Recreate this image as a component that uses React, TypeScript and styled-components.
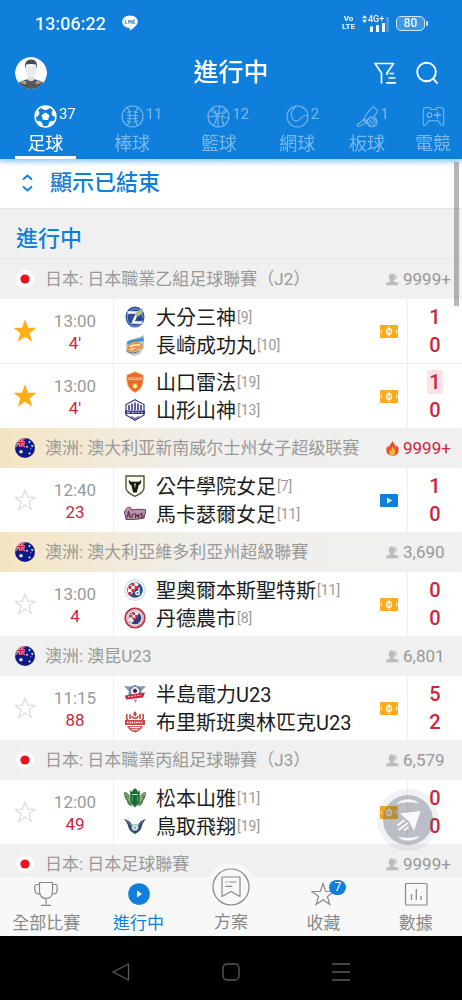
import React, { useState } from "react";
import styled, { createGlobalStyle, css } from "styled-components";

const blue = "#0f7fdb";
const red = "#cb2640";
const grey = "#999999";
const line = "#efefef";

const GlobalStyle = createGlobalStyle`
  * { box-sizing: border-box; }
  body {
    margin: 0;
    background: #000;
    font-family: Roboto, "Noto Sans CJK TC", sans-serif;
    color: #1c1c1c;
  }
  button {
    font: inherit;
    color: inherit;
    background: none;
    border: 0;
    padding: 0;
    margin: 0;
    cursor: pointer;
  }
  h1, h2, h3, ul, p { margin: 0; padding: 0; }
  ul { list-style: none; }
  svg { display: block; flex: none; }
`;

const Screen = styled.div`
  display: flex;
  flex-direction: column;
  height: 100vh;
  background: #fff;
`;

/* ---------- header ---------- */

const Header = styled.header`
  position: relative;
  z-index: 2;
  flex: none;
  background: ${blue};
  color: #fff;
  box-shadow: 0 1px 6px 1px rgba(30, 140, 235, 0.6);
`;

const StatusBar = styled.div`
  display: flex;
  align-items: center;
  height: 46px;
  padding: 0 34px 0 35px;
  color: #eef6fd;
`;

const Clock = styled.time`
  font-size: 18px;
  font-weight: 500;
  margin-right: 16px;
`;

const StatusRight = styled.div`
  display: flex;
  align-items: center;
  gap: 7px;
  margin-left: auto;
`;

const Volte = styled.span`
  display: flex;
  flex-direction: column;
  align-items: center;
  font-size: 8px;
  line-height: 8px;
  font-weight: 700;
`;

const Signal = styled.span`
  display: grid;
  grid-template-columns: 5px 17px 3px;
  column-gap: 1px;
  align-items: start;
`;

const Network = styled.span`
  display: block;
  font-size: 9px;
  line-height: 8px;
  font-weight: 500;
`;

const Battery = styled.span`
  position: relative;
  width: 29px;
  height: 15px;
  border: 1px solid #cfe5f8;
  border-radius: 5px;
  background: #3f98e2;
  font-size: 12px;
  line-height: 13px;
  font-weight: 500;
  text-align: center;
  margin-right: 3px;
  &::after {
    content: "";
    position: absolute;
    right: -4px;
    top: 4px;
    width: 2px;
    height: 5px;
    border-radius: 1px;
    background: #cfe5f8;
  }
`;

const TitleBar = styled.div`
  display: grid;
  grid-template-columns: 1fr auto 1fr;
  align-items: center;
  height: 54px;
  padding: 0 15px;
`;

const PageTitle = styled.h1`
  font-size: 25px;
  line-height: 36px;
  font-weight: 500;
`;

const Avatar = styled.button`
  width: 32px;
  height: 32px;
  border-radius: 50%;
  overflow: hidden;
`;

const Actions = styled.div`
  display: flex;
  justify-content: flex-end;
  gap: 18px;
  padding-right: 8px;
`;

const Tabs = styled.div`
  display: flex;
  gap: 26px;
  padding: 0 11px 0 15px;
  height: 59px;
  overflow: hidden;
`;

const Tab = styled.button<{ $on?: boolean }>`
  display: flex;
  flex-direction: column;
  align-items: center;
  flex: none;
  padding-top: 5px;
  color: ${(p) => (p.$on ? "#fff" : "#79b8ec")};
  border-bottom: 3px solid ${(p) => (p.$on ? "#fff" : "transparent")};
`;

const TabTop = styled.span`
  display: grid;
  grid-template-columns: 1fr auto 1fr;
`;

const TabCount = styled.span`
  grid-column: 3;
  padding-left: 2px;
  font-size: 15px;
  line-height: 19px;
`;

const TabIcon = styled.span`
  grid-column: 2;
`;

const TabLabel = styled.span`
  font-size: 18px;
  line-height: 26px;
  margin-top: 3px;
`;

/* ---------- list ---------- */

const Body = styled.div`
  position: relative;
  flex: 1;
  min-height: 0;
`;

const Scroller = styled.main`
  height: 100%;
  overflow-y: auto;
  scrollbar-width: none;
`;

const ScrollThumb = styled.div`
  position: absolute;
  top: 3px;
  right: 3px;
  width: 5px;
  height: 144px;
  background: rgba(110, 110, 110, 0.5);
`;

const ShowFinished = styled.button`
  display: flex;
  align-items: center;
  gap: 17px;
  width: 100%;
  height: 50px;
  padding: 0 22px 2px;
  color: ${blue};
  background: #fff;
  border-bottom: 1px solid #e4e4e4;
  font-size: 22px;
  line-height: 32px;
  font-weight: 500;
`;

const SectionTitle = styled.h2`
  height: 50px;
  padding: 14px 16px 0;
  background: #f0f0f0;
  color: ${blue};
  border-bottom: 1px solid #e8e8e8;
  font-size: 22px;
  line-height: 32px;
  font-weight: 500;
`;

const LeagueHead = styled.div<{ $gold?: boolean }>`
  display: grid;
  grid-template-columns: 45px 1fr 76px;
  align-items: center;
  height: 40px;
  color: ${grey};
  background: ${(p) =>
    p.$gold ? "linear-gradient(90deg, #f4e5c3 0%, #f0efed 45%, #f0f0f0 100%)" : "#f0f0f0"};
`;

const FlagCell = styled.span`
  display: flex;
  padding-left: 15px;
`;

const LeagueName = styled.h3`
  font-size: 17px;
  line-height: 24px;
  font-weight: 400;
  white-space: nowrap;
`;

const Viewers = styled.span<{ $hot?: boolean }>`
  display: flex;
  align-items: center;
  gap: 4px;
  font-size: 17px;
  color: ${(p) => (p.$hot ? red : grey)};
`;

const MatchRow = styled.li`
  display: grid;
  grid-template-columns: 50px 64px 1fr 27px 55px;
  box-sizing: content-box;
  height: 64px;
  background: #fff;
  & + & {
    border-top: 1px solid ${line};
  }
`;

const StarButton = styled.button`
  display: flex;
  align-items: center;
  justify-content: center;
`;

const TimeCell = styled.div`
  display: flex;
  flex-direction: column;
  justify-content: center;
  padding: 1px 13px 0 0;
  border-right: 1px solid ${line};
  font-size: 17px;
  line-height: 22px;
  text-align: center;
  color: ${grey};
`;

const Minute = styled.span`
  color: ${red};
`;

const Teams = styled.div`
  display: flex;
  flex-direction: column;
  justify-content: center;
  padding-left: 10px;
  min-width: 0;
`;

const Team = styled.div`
  display: flex;
  align-items: center;
  height: 28px;
  white-space: nowrap;
`;

const TeamName = styled.span`
  margin-left: 10px;
  padding-top: 1px;
  font-size: 20px;
  line-height: 28px;
`;

const Rank = styled.span`
  margin-left: 1px;
  font-size: 14px;
  color: ${grey};
`;

const Media = styled.div`
  display: flex;
  align-items: center;
`;

const Scores = styled.div`
  display: flex;
  flex-direction: column;
  justify-content: center;
  align-items: center;
  gap: 4px;
  border-left: 1px solid ${line};
`;

const Score = styled.span<{ $flash?: boolean }>`
  width: 16px;
  height: 24px;
  border-radius: 3px;
  font-size: 20px;
  line-height: 24px;
  font-weight: 500;
  text-align: center;
  color: ${red};
  ${(p) =>
    p.$flash &&
    css`
      background: #fae2e5;
    `}
`;

const Fab = styled.button`
  position: absolute;
  right: 23px;
  bottom: 26px;
  width: 62px;
  height: 62px;
`;

/* ---------- bottom ---------- */

const BottomNav = styled.nav`
  position: relative;
  z-index: 2;
  display: flex;
  align-items: flex-start;
  flex: none;
  height: 59px;
  background: #f8f8f8;
`;

const NavItem = styled.button<{ $on?: boolean; $raised?: boolean }>`
  display: flex;
  flex-direction: column;
  align-items: center;
  flex: 1;
  gap: ${(p) => (p.$raised ? "0" : "6px")};
  padding-top: ${(p) => (p.$raised ? "0" : "5px")};
  margin-top: ${(p) => (p.$raised ? "-14px" : "0")};
  color: ${(p) => (p.$on ? blue : "#888")};
`;

const NavIcon = styled.span<{ $raised?: boolean }>`
  position: relative;
  display: flex;
  align-items: center;
  justify-content: center;
  width: ${(p) => (p.$raised ? "48px" : "24px")};
  height: ${(p) => (p.$raised ? "48px" : "24px")};
  border-radius: 50%;
  background: #f8f8f8;
`;

const NavLabel = styled.span`
  font-size: 17px;
  line-height: 22px;
`;

const Badge = styled.span`
  position: absolute;
  top: -2px;
  left: 18px;
  width: 17px;
  height: 15px;
  border-radius: 8px;
  background: ${blue};
  color: #fff;
  font-size: 12px;
  line-height: 15px;
  text-align: center;
`;

const SystemNav = styled.div`
  display: flex;
  align-items: center;
  justify-content: center;
  gap: 92px;
  flex: none;
  height: 64px;
  padding-top: 8px;
  background: #000;
  color: #5c5c5c;
`;

/* ---------- sport icons ---------- */

const Sport = ({ children }: { children: React.ReactNode }) => (
  <svg width="23" height="23" viewBox="0 0 23 23" fill="none" stroke="currentColor" strokeWidth="1.1" strokeLinecap="round" strokeLinejoin="round">
    {children}
  </svg>
);

const sportIcons: Record<string, React.ReactNode> = {
  soccer: (
    <Sport>
      <circle cx="11.5" cy="11.5" r="10.4" strokeWidth="1.5" />
      <g fill="currentColor" stroke="none">
        <path d="M11.5 7.400l4 2.900-1.500 4.700H9l-1.500-4.700z" />
        <path d="M7.300 2.200c2.600-1.300 5.800-1.300 8.400 0l-1 1.800-3.200 1.200-3.200-1.200z" />
        <path d="M1 11.200c0-2.200.8-4.400 2.100-5.900l1.900.7.400 3.200L3.200 11.800z" />
        <path d="M22 11.200c0-2.200-.8-4.400-2.100-5.900l-1.900.7-.4 3.200 2.200 2.600z" />
        <path d="M3 17.300c1.200 1.900 3.100 3.400 5.200 4l.6-2-1.600-2.700-3.100-.8z" />
        <path d="M20 17.300c-1.200 1.900-3.100 3.400-5.200 4l-.6-2 1.600-2.700 3.100-.8z" />
      </g>
    </Sport>
  ),
  baseball: (
    <Sport>
      <circle cx="11.500" cy="11.500" r="10.500" />
      <path d="M6.500 2.500c3 5.500 3 12.500 0 18M16.500 2.500c-3 5.500-3 12.500 0 18" />
      <path d="M6.200 7.500l4-1M6.600 10.500h4.200M6.600 13.300l4.200.4M6 16l4 1.300M16.800 7.500l-4-1M16.400 10.500h-4.200M16.400 13.300l-4.200.4M17 16l-4 1.300" />
    </Sport>
  ),
  basketball: (
    <Sport>
      <circle cx="11.500" cy="11.500" r="10.500" />
      <path d="M13 1.200C11 8 10.500 15 11 22M1.200 12c7-1.500 14-1.500 20.600 1.500" />
      <path d="M5 3.500c5 3 6 10 1.500 17M20.300 6c-6 2.500-6.500 9.500-3 14.300M3.500 5c4 5 11 5.500 15.500-1" />
    </Sport>
  ),
  tennis: (
    <Sport>
      <circle cx="11.500" cy="11.500" r="10.500" />
      <path d="M9.800 1.300C5.500 5 4 10.500 6.500 14c2.200 3 5.900 2.600 7.800-.2 1.700-2.500 4.200-3.500 7.500-3.300" />
    </Sport>
  ),
  cricket: (
    <Sport>
      <path d="M17.500 1.700l4 3.600c.3 2-6.500 10.500-10 13.200L7.200 15C9 11 14.500 3.500 17.500 1.700z" />
      <path d="M8.300 14l3.800 3.500M7.300 15.200l-5.800 4.300c-.9.900.8 2.600 1.800 1.700L9.500 18" />
      <circle cx="16" cy="16.800" r="5" fill={blue} />
      <path d="M12.500 13.800l6 7M14.800 12l5.500 6.700M11.300 16.500l4 5M17.500 12.200l3 3.700" />
    </Sport>
  ),
  esports: (
    <Sport>
      <path d="M4 2.500h4.500v2h6v-2H19c2.200 0 2.700 2 2.700 4v12.200c0 1.800-2 2.300-3 .8l-2.400-3.800H6.700l-2.400 3.800c-1 1.500-3 1-3-.8V6.500c0-2 .5-4 2.700-4z" />
      <circle cx="7.500" cy="10" r="2.300" />
      <path d="M15.500 7v6M12.500 10h6" strokeWidth="1.500" />
    </Sport>
  ),
};

/* ---------- flags and marks ---------- */

const Flag = ({ country }: { country: string }) =>
  country === "jp" ? (
    <svg width="20" height="20" viewBox="0 0 20 20" role="img" aria-label="日本">
      <circle cx="10" cy="10" r="9" fill="#fff" />
      <circle cx="10" cy="10" r="4.600" fill="#e8131f" />
    </svg>
  ) : (
    <svg width="20" height="20" viewBox="0 0 20 20" role="img" aria-label="澳洲">
      <defs>
        <clipPath id="disc">
          <circle cx="10" cy="10" r="10" />
        </clipPath>
      </defs>
      <g clipPath="url(#disc)">
        <path d="M0 0h20v20H0z" fill="#101a86" />
        <path d="M0 0l10 9M10 0L0 9" stroke="#f3d3da" strokeWidth="1.600" />
        <path d="M0 0l10 9M10 0L0 9" stroke="#d8203a" strokeWidth=".9" />
        <path d="M5.500 0v9M0 4.700h10" stroke="#f6dfe4" strokeWidth="2.400" />
        <path d="M5.500 0v9M0 4.700h10" stroke="#d8203a" strokeWidth="1.500" />
        <g fill="#fff">
          <path d="M6 11.400l.6 1.300 1.400-.2-.8 1.200.8 1.200-1.400-.1-.6 1.200-.6-1.200-1.400.1.800-1.200-.8-1.200 1.400.2z" />
          <circle cx="14.500" cy="4" r=".9" />
          <circle cx="12" cy="8.800" r=".9" />
          <circle cx="17.200" cy="8" r=".9" />
          <circle cx="14.500" cy="15.500" r="1" />
          <circle cx="15.800" cy="10.800" r=".5" />
        </g>
      </g>
    </svg>
  );

const Person = () => (
  <svg width="13" height="13" viewBox="0 0 13 13" aria-hidden="true">
    <circle cx="8.500" cy="4" r="2.800" fill="#d2d2d2" />
    <path d="M6 12c0-3 2-3.500 3.500-3.500S13 9.500 13 12z" fill="#d2d2d2" />
    <ellipse cx="5.800" cy="4" rx="3" ry="3.600" fill="#bcbcbc" />
    <path d="M0 12.300c0-2.800 1.500-3.200 4.200-3.900V6.500h3.200v1.900c2.600.7 4.200 1.100 4.200 3.900z" fill="#bcbcbc" />
  </svg>
);

const Fire = () => (
  <svg width="13" height="15" viewBox="0 0 13 15" aria-hidden="true">
    <path d="M6.500 0c.8 2.500 3 3.300 3.200 6 .7-.4.900-1.200.9-2 1.500 1.600 2.200 3.400 2 5.500-.3 3.300-2.800 5.300-6.200 5.300S.5 12.700.3 9.600C.2 7.700 1 6 2.300 4.600c0 1 .2 1.600.8 2C3 4 5.500 2.800 6.500 0z" fill="#e2503a" />
    <path d="M6.700 5.500c.4 1.800 2.800 2.700 2.700 5.600-.1 2-1.300 3.500-3 3.500s-3-1.300-3.100-3.200c0-1.200.5-2 1.200-2.700.1.700.4 1 .8 1.200 0-1.600.4-3 1.400-4.400z" fill="#ffb534" />
  </svg>
);

const Star = ({ on }: { on: boolean }) => (
  <svg width="22" height="22" viewBox="0 0 22 22" aria-hidden="true">
    <path
      d="M11 1l2.500 7.200 7.600.1-6.100 4.600 2.200 7.400L11 15.900l-6.200 4.400L7 12.900.9 8.300l7.600-.1z"
      fill={on ? "#ffae17" : "none"}
      stroke={on ? "#ffae17" : "#dcdcdc"}
      strokeWidth="1.200"
    />
  </svg>
);

const Pitch = () => (
  <svg width="18" height="13" viewBox="0 0 18 13" role="img" aria-label="動畫直播">
    <rect width="18" height="13" rx="1" fill="#fcab18" />
    <path d="M9 1.500v10M1.300 4.800v3.400M16.700 4.800v3.400" stroke="#fff" strokeWidth="1" />
    <ellipse cx="9" cy="6.500" rx="2.500" ry="2.900" fill="none" stroke="#fff" strokeWidth="1.300" />
  </svg>
);

const Video = () => (
  <svg width="18" height="13" viewBox="0 0 18 13" role="img" aria-label="影片直播">
    <rect width="18" height="13" rx="1" fill={blue} />
    <path d="M7 3.500l5 3-5 3z" fill="#fff" />
  </svg>
);

/* ---------- club crests ---------- */

const crests: Record<string, React.ReactNode> = {
  oita: (
    <>
      <ellipse cx="11" cy="11" rx="9.500" ry="10.500" fill="#2b4f9e" />
      <ellipse cx="11" cy="11.500" rx="7.800" ry="8.800" fill="none" stroke="#9db4dd" strokeWidth=".8" />
      <path d="M3.500 6.500h10L9 16.500h9" fill="none" stroke="#fff" strokeWidth="2.400" />
      <path d="M11 7l8-5-1 6-6 3z" fill="#b4bd8e" />
      <path d="M13 12h6v2h-6z" fill="#24468f" />
    </>
  ),
  nagasaki: (
    <>
      <path d="M2 8l8-3 10-4v13l-4 6-6 2-8-4z" fill="#c5c8cc" />
      <path d="M3 8c5-4 10-2 16-5l1 4c-6 1-11 0-16 4z" fill="#3b93cf" />
      <path d="M4 12c3-5 11-5 14-2 2 3-1 6-4 5-3 4-8 3-11 1z" fill="#f29135" />
      <path d="M6 13c3-3 7-2 10-2M6 16l5-2" stroke="#fff" strokeWidth="1.300" fill="none" />
      <path d="M3 17c4 3 9 2 12 0" stroke="#71675f" fill="none" />
    </>
  ),
  renofa: (
    <>
      <path d="M11 .8l8 3.200c.8 8-1 14-8 17.500C4 18 2.200 12 3 4z" fill="#e96a25" stroke="#f3b084" strokeWidth="1" />
      <path d="M4.500 6.500h13v2.600h-13z" fill="#f6c6a4" />
      <path d="M6 7.800h10" stroke="#d45a17" strokeWidth="1" strokeDasharray="1.500 .8" />
      <circle cx="11" cy="15" r="2.700" fill="#f7b32d" />
      <path d="M11 13l2 2-2 2-2-2z" fill="#fff" />
    </>
  ),
  yamagata: (
    <>
      <path d="M11 .8l9 4.700v10.500L11 21.300l-9-5.300V5.500z" fill="#fff" stroke="#3b3686" strokeWidth="1.200" />
      <path d="M5 11V6M8 11V4.500M11 11V3.500M14 11V4.500M17 11V6" stroke="#3b3686" strokeWidth="1.600" />
      <path d="M1 11.500h20v3.500H1z" fill="#3b3686" />
      <path d="M3.500 14v-1l1 .7 1-.7v1M8 13.500h2M12 12.500v1.500M14 13.500h1.500M17 13.500h1.500" stroke="#fff" strokeWidth=".8" fill="none" />
      <path d="M7 17.500l4 2 4-2" stroke="#3b3686" fill="none" />
    </>
  ),
  bulls: (
    <>
      <path d="M2 1h18v12c0 4-5 6.500-9 8.300C7 19.500 2 17 2 13z" fill="#fbfaf0" stroke="#55512f" strokeWidth="1.400" />
      <path d="M5 4.500c.6 1.800 1.600 2.300 3 2.300h6c1.400 0 2.400-.5 3-2.300.7 2.800-.3 4.800-2.300 5.700L12.800 17.500H9.200L7.300 10.200C5.300 9.300 4.300 7.300 5 4.500z" fill="#191919" />
      <path d="M10.200 8.500l.8 5 .8-5z" fill="#fbfaf0" />
    </>
  ),
  rams: (
    <>
      <path d="M.500 9c2-6 7-6 7-2 5-1 10-1 14.500 0l-2 8c-5 1.500-13 1.500-18 1.500z" fill="#b795ac" stroke="#693653" strokeWidth="1" />
      <path d="M3 15l1.500-7 2 7M3.500 12.500h3M8 15l.5-4 2 0M11.500 15v-4l2 2.500 1.500-2.500-.5 4M19 10.500c-3-.5-2.500 2-.8 2s1 2.500-1.700 1.800" fill="none" stroke="#5c2848" strokeWidth="1.100" />
    </>
  ),
  saints: (
    <>
      <circle cx="11" cy="11" r="10.300" fill="#f2f3f5" stroke="#cbd5df" strokeWidth="1" />
      <circle cx="11" cy="11" r="7.800" fill="#2e4c8d" />
      <path d="M4 8l6-5 5 2-8 11-3-3z" fill="#fff" />
      <path d="M4.500 7h3v3h-3zM7.500 4h3v3h-3zM10.500 7h3v3h-3zM7.500 10h3v3h-3zM4.500 13h3v3h-3z" fill="#d9303f" />
      <path d="M15 8.500v7h-2.200c-2-1-1-3.500 2.200-3" fill="none" stroke="#fff" strokeWidth="1.300" />
    </>
  ),
  dandenong: (
    <>
      <circle cx="11" cy="11" r="9.800" fill="#f7e9eb" stroke="#bc2c43" strokeWidth="1.600" />
      <circle cx="11" cy="11" r="8" fill="none" stroke="#c4727f" strokeWidth="1.200" strokeDasharray="1.200 1" />
      <circle cx="11" cy="11" r="6.300" fill="#333f7c" />
      <path d="M6 8l5-3 4 1-7 10-3-3z" fill="#fff" />
      <path d="M6 8h2.500v2.500H6zM8.500 5.500H11V8H8.500zM11 8h2.500v2.500H11zM8.500 10.500H11V13H8.500z" fill="#d9303f" />
    </>
  ),
  peninsula: (
    <>
      <path d="M0 3l8 .5L11 2l3 1.500L22 3l-5 5.500 2 3.500H4l1-3.500z" fill="#8994bc" />
      <circle cx="11" cy="8" r="5" fill="#eceef4" stroke="#353c6c" strokeWidth=".8" />
      <path d="M11 5.500l2.200 1.700-.9 2.500H9.700l-.9-2.500zM7 5.500l1.500-1.500v1.500zM15 5.500l-1.500-1.500v1.500z" fill="#262c55" />
      <path d="M1 12.500l20-3-2 5-17 2z" fill="#c9243b" />
      <path d="M4 14l13-2" stroke="#fff" strokeWidth=".8" strokeDasharray="2 1" />
      <path d="M9.500 16.500h4l-2 3.500z" fill="#9aa0b2" />
    </>
  ),
  olympic: (
    <>
      <path d="M11 0l2 3-2 3-2-3z" fill="#c44a44" />
      <path d="M3 3c-1 4 0 6 2 7M19 3c1 4 0 6-2 7M6 3v5M16 3v5M8 5c0 3 6 3 6 0" stroke="#c44a44" strokeWidth="1.600" fill="none" />
      <path d="M1 9h20v5H1z" fill="#c44a44" />
      <path d="M3 11.500h16" stroke="#fff" strokeWidth="1.400" strokeDasharray="1.300 1" />
      <path d="M3 15h16c-1 3.500-4 5-8 6.800C7 20 4 18.500 3 15z" fill="#cf655f" />
      <path d="M6 16.500h10M8 18.500h6" stroke="#fff" strokeWidth=".8" />
    </>
  ),
  yamaga: (
    <>
      <path d="M0 5c3 0 5 2 6 5l2 9c-2 0-5-2-5-5C1 12 0 8 0 5zM22 5c-3 0-5 2-6 5l-2 9c2 0 5-2 5-5 2-2 3-6 3-9z" fill="#4c7f51" />
      <path d="M1 6l5 6M21 6l-5 6M3 11l4 4M19 11l-4 4" stroke="#e2dfa8" strokeWidth=".7" />
      <path d="M6 3.500l2 1 1-2 2-1.500 2 1.500 1 2 2-1v12l-5 5-5-5z" fill="#186b3a" stroke="#d7d9a2" strokeWidth=".6" />
      <path d="M8.500 9v6M13.500 9v6" stroke="#68a568" strokeWidth=".8" />
      <path d="M8 7.500h6" stroke="#fff" strokeWidth=".8" />
    </>
  ),
  gainare: (
    <>
      <path d="M0 4c5 1 8 4 9 9l2-2 2 2c1-5 4-8 9-9-3 3-4 6-5 10-1 2-3 3-6 5-3-2-5-3-6-5C4 10 3 7 0 4z" fill="#30466f" />
      <circle cx="11" cy="12.500" r="3.300" fill="#dfe9ea" stroke="#6fa58c" strokeWidth=".8" />
      <path d="M11 10.500l1.500 2-1.500 2-1.500-2z" fill="#9aaab5" />
      <path d="M3 6l5 5M19 6l-5 5" stroke="#8e9dba" strokeWidth=".8" />
    </>
  ),
};

const Crest = ({ id }: { id: string }) => (
  <svg width="22" height="22" viewBox="0 0 22 22" aria-hidden="true">
    {crests[id]}
  </svg>
);

/* ---------- data ---------- */

type Side = { crest: string; name: string; rank?: string; score: number; flash?: boolean };
type Match = { time: string; minute: string; fav?: boolean; video?: boolean; sides: [Side, Side] };
type League = { country: string; name: string; viewers: string; hot?: boolean; gold?: boolean; matches: Match[] };

const tabs = [
  { icon: "soccer", label: "足球", count: "37" },
  { icon: "baseball", label: "棒球", count: "11" },
  { icon: "basketball", label: "籃球", count: "12" },
  { icon: "tennis", label: "網球", count: "2" },
  { icon: "cricket", label: "板球", count: "1" },
  { icon: "esports", label: "電競", count: "" },
];

const leagues: League[] = [
  {
    country: "jp",
    name: "日本: 日本職業乙組足球聯賽（J2）",
    viewers: "9999+",
    matches: [
      {
        time: "13:00",
        minute: "4'",
        fav: true,
        sides: [
          { crest: "oita", name: "大分三神", rank: "9", score: 1 },
          { crest: "nagasaki", name: "長崎成功丸", rank: "10", score: 0 },
        ],
      },
      {
        time: "13:00",
        minute: "4'",
        fav: true,
        sides: [
          { crest: "renofa", name: "山口雷法", rank: "19", score: 1, flash: true },
          { crest: "yamagata", name: "山形山神", rank: "13", score: 0 },
        ],
      },
    ],
  },
  {
    country: "au",
    name: "澳洲: 澳大利亚新南威尔士州女子超级联赛",
    viewers: "9999+",
    hot: true,
    gold: true,
    matches: [
      {
        time: "12:40",
        minute: "23",
        video: true,
        sides: [
          { crest: "bulls", name: "公牛學院女足", rank: "7", score: 1 },
          { crest: "rams", name: "馬卡瑟爾女足", rank: "11", score: 0 },
        ],
      },
    ],
  },
  {
    country: "au",
    name: "澳洲: 澳大利亞維多利亞州超級聯賽",
    viewers: "3,690",
    gold: true,
    matches: [
      {
        time: "13:00",
        minute: "4",
        sides: [
          { crest: "saints", name: "聖奧爾本斯聖特斯", rank: "11", score: 0 },
          { crest: "dandenong", name: "丹德農市", rank: "8", score: 0 },
        ],
      },
    ],
  },
  {
    country: "au",
    name: "澳洲: 澳昆U23",
    viewers: "6,801",
    matches: [
      {
        time: "11:15",
        minute: "88",
        sides: [
          { crest: "peninsula", name: "半島電力U23", score: 5 },
          { crest: "olympic", name: "布里斯班奧林匹克U23", score: 2 },
        ],
      },
    ],
  },
  {
    country: "jp",
    name: "日本: 日本職業丙組足球聯賽（J3）",
    viewers: "6,579",
    matches: [
      {
        time: "12:00",
        minute: "49",
        sides: [
          { crest: "yamaga", name: "松本山雅", rank: "11", score: 0 },
          { crest: "gainare", name: "鳥取飛翔", rank: "19", score: 0 },
        ],
      },
    ],
  },
  { country: "jp", name: "日本: 日本足球聯賽", viewers: "9999+", matches: [] },
];

/* ---------- parts ---------- */

function MatchItem({ match }: { match: Match }) {
  const [fav, setFav] = useState(!!match.fav);
  return (
    <MatchRow>
      <StarButton aria-label="收藏" aria-pressed={fav} onClick={() => setFav(!fav)}>
        <Star on={fav} />
      </StarButton>
      <TimeCell>
        <span>{match.time}</span>
        <Minute>{match.minute}</Minute>
      </TimeCell>
      <Teams>
        {match.sides.map((s) => (
          <Team key={s.name}>
            <Crest id={s.crest} />
            <TeamName>{s.name}</TeamName>
            {s.rank && <Rank>[{s.rank}]</Rank>}
          </Team>
        ))}
      </Teams>
      <Media>{match.video ? <Video /> : <Pitch />}</Media>
      <Scores>
        {match.sides.map((s) => (
          <Score key={s.name} $flash={s.flash}>
            {s.score}
          </Score>
        ))}
      </Scores>
    </MatchRow>
  );
}

export default function App() {
  const [tab, setTab] = useState("soccer");
  return (
    <Screen lang="zh-Hant">
      <GlobalStyle />
      <Header>
        <StatusBar>
          <Clock>13:06:22</Clock>
          <svg width="16" height="16" viewBox="0 0 16 16" aria-label="LINE" role="img">
            <path d="M8 .5c4.300 0 7.800 2.800 7.800 6.300 0 3.300-4.500 6.500-7.500 8.700-.6.300-.5-.5-.4-2.300C3.700 13.100.2 10.300.2 6.800.2 3.300 3.700.5 8 .5z" fill="#fff" />
            <path d="M3.400 5v3.500H5M6.400 5v3.500M7.900 8.500V5l2 3.500V5M12.900 5h-1.700v3.500h1.700M11.200 6.700h1.500" stroke={blue} strokeWidth=".8" fill="none" />
          </svg>
          <StatusRight>
            <Volte>
              <span>Vo</span>
              <span>LTE</span>
            </Volte>
            <Signal>
              <svg width="5" height="8" viewBox="0 0 5 8" fill="currentColor" aria-hidden="true">
                <path d="M2.500 0L5 3.300H0zM2.500 8L0 4.700h5z" />
              </svg>
              <span>
                <Network>4G+</Network>
                <svg width="17" height="9" viewBox="0 0 17 9" fill="currentColor" aria-hidden="true">
                  <path d="M2 3.500h3V9H2zM8 2h3v7H8zM14 0h3v9h-3z" />
                </svg>
              </span>
              <svg width="3" height="17" viewBox="0 0 3 17" aria-hidden="true">
                <path d="M0 2h3v15H0z" fill="#3f98e2" />
              </svg>
            </Signal>
            <Battery>80</Battery>
          </StatusRight>
        </StatusBar>
        <TitleBar>
          <Avatar aria-label="個人檔案">
            <svg width="32" height="32" viewBox="0 0 32 32" aria-hidden="true">
              <circle cx="16" cy="16" r="16" fill="#fff" />
              <path d="M3.500 25.500c2-1.700 6-2.500 9-3.200l3.500 2 3.500-2c3 .7 7 1.500 9 3.200C25.500 30 21 32 16 32S6.500 30 3.500 25.500z" fill="#55575b" />
              <path d="M4.500 24l6 3M6.500 22.800l5 3M27.500 24l-6 3M25.500 22.800l-5 3" stroke="#fff" strokeWidth=".8" />
              <path d="M13 18h6v4.500c-1 2-5 2-6 0z" fill="#d9dbde" />
              <path d="M10.700 9h10.600c.4 7-1.800 11.500-5.300 11.500S10.300 16 10.700 9z" fill="#e9eaec" />
              <path d="M10.200 11.500C9 5.500 12 2.500 16.300 2.500c4.200 0 6.500 3 5.500 9l-1-4c-2.500-.8-7-.8-9.600 0z" fill="#47494d" />
            </svg>
          </Avatar>
          <PageTitle>進行中</PageTitle>
          <Actions>
            <button aria-label="篩選">
              <svg width="24" height="24" viewBox="0 0 24 24" fill="none" stroke="currentColor" strokeWidth="1.700" strokeLinejoin="round">
                <path d="M8.500 22.500V12L2 2.500h18.500L14 12v2" />
                <path d="M16.500 12.500H21M15.500 17h7M13.200 21.800h9.800" />
              </svg>
            </button>
            <button aria-label="搜尋">
              <svg width="24" height="24" viewBox="0 0 24 24" fill="none" stroke="currentColor" strokeWidth="1.900" strokeLinecap="round">
                <circle cx="11.500" cy="11" r="9.300" />
                <path d="M18.300 17.700l3.700 4.300" />
              </svg>
            </button>
          </Actions>
        </TitleBar>
        <Tabs role="tablist">
          {tabs.map((t) => (
            <Tab key={t.icon} role="tab" aria-selected={tab === t.icon} $on={tab === t.icon} onClick={() => setTab(t.icon)}>
              <TabTop>
                <TabIcon>{sportIcons[t.icon]}</TabIcon>
                {t.count && <TabCount>{t.count}</TabCount>}
              </TabTop>
              <TabLabel>{t.label}</TabLabel>
            </Tab>
          ))}
        </Tabs>
      </Header>

      <Body>
        <Scroller>
          <ShowFinished>
            <svg width="11" height="18" viewBox="0 0 11 18" fill="none" stroke="currentColor" strokeWidth="1.900" aria-hidden="true">
              <path d="M1 5.500l4.500-4 4.500 4M1 12.500l4.500 4 4.500-4" />
            </svg>
            顯示已結束
          </ShowFinished>
          <SectionTitle>進行中</SectionTitle>
          {leagues.map((lg) => (
            <section key={lg.name}>
              <LeagueHead $gold={lg.gold}>
                <FlagCell>
                  <Flag country={lg.country} />
                </FlagCell>
                <LeagueName>{lg.name}</LeagueName>
                <Viewers $hot={lg.hot}>
                  {lg.hot ? <Fire /> : <Person />}
                  {lg.viewers}
                </Viewers>
              </LeagueHead>
              <ul>
                {lg.matches.map((m) => (
                  <MatchItem key={m.sides[0].name} match={m} />
                ))}
              </ul>
            </section>
          ))}
        </Scroller>
        <ScrollThumb />
        <Fab aria-label="分享">
          <svg width="62" height="62" viewBox="0 0 62 62" aria-hidden="true">
            <circle cx="31" cy="31" r="31" fill="#5a5f78" fillOpacity=".08" />
            <circle cx="31" cy="31" r="25" fill="#5a6078" fillOpacity=".36" />
            <g fill="#fff" fillOpacity=".9">
              <path d="M23 24.500L43.500 22 37 42l-4.500-9z" />
              <path d="M20.500 14.500c4-4.500 15-5.500 20.500-.5-5-1.500-14-1.500-20.500.5zM42 47.500c-4 4.500-15 5.500-20.500.5 5 1.500 14 1.500 20.500-.5z" stroke="#fff" strokeWidth=".6" />
            </g>
            <path d="M20.500 36.500l7-5.500M21.500 41l9.500-7M27 41.500l4.500-3.500" stroke="#fff" strokeWidth="1.900" strokeOpacity=".9" />
          </svg>
        </Fab>
      </Body>

      <BottomNav>
        <NavItem>
          <NavIcon>
            <svg width="24" height="26" viewBox="0 0 24 26" fill="none" stroke="currentColor" strokeWidth="1.200" strokeLinejoin="round">
              <path d="M5.500 1.500h13v9c0 4-2.500 7-6.500 7s-6.500-3-6.500-7zM12 17.500v6M7 24.300h10" />
              <path d="M5.500 3.500H2L.8 5v4l1 3 4 1.500M18.500 3.500H22L23.200 5v4l-1 3-4 1.500" />
            </svg>
          </NavIcon>
          <NavLabel>全部比賽</NavLabel>
        </NavItem>
        <NavItem $on aria-current="page">
          <NavIcon>
            <svg width="22" height="22" viewBox="0 0 22 22">
              <circle cx="11" cy="11" r="10.800" fill="currentColor" />
              <path d="M9 7.500l5 3.500-5 3.500z" fill="#fff" />
            </svg>
          </NavIcon>
          <NavLabel>進行中</NavLabel>
        </NavItem>
        <NavItem $raised>
          <NavIcon $raised>
            <svg width="38" height="38" viewBox="0 0 38 38" fill="none" stroke="currentColor" strokeWidth="1.200">
              <circle cx="19" cy="19" r="18" />
              <path d="M10 9h18v19.500l-9-5-9 5z" strokeLinejoin="round" />
              <path d="M13.500 14h2M17 14h7.500M13.500 18.300h7" />
            </svg>
          </NavIcon>
          <NavLabel>方案</NavLabel>
        </NavItem>
        <NavItem>
          <NavIcon>
            <svg width="24" height="24" viewBox="0 0 24 24" fill="none" stroke="currentColor" strokeWidth="1.200">
              <path d="M12 1.500l2.700 7.900 8.300.1-6.600 5 2.400 8-6.800-4.800-6.800 4.800 2.400-8L1 9.500l8.300-.1z" />
            </svg>
            <Badge>7</Badge>
          </NavIcon>
          <NavLabel>收藏</NavLabel>
        </NavItem>
        <NavItem>
          <NavIcon>
            <svg width="24" height="24" viewBox="0 0 24 24" fill="none" stroke="currentColor" strokeWidth="1.200">
              <rect x="1.500" y="1.500" width="21.500" height="21.500" rx="1" />
              <path d="M7.500 12v6M12.300 7v11M17 14v4" />
            </svg>
          </NavIcon>
          <NavLabel>數據</NavLabel>
        </NavItem>
      </BottomNav>

      <SystemNav>
        <button aria-label="返回">
          <svg width="18" height="18" viewBox="0 0 18 18" fill="none" stroke="currentColor" strokeWidth="1.300" strokeLinejoin="round">
            <path d="M16.500 1v16L1 9z" />
          </svg>
        </button>
        <button aria-label="主畫面">
          <svg width="18" height="18" viewBox="0 0 18 18" fill="none" stroke="currentColor" strokeWidth="1.300">
            <rect x="1" y="1" width="16" height="16" rx="4" />
          </svg>
        </button>
        <button aria-label="最近使用">
          <svg width="18" height="18" viewBox="0 0 18 18" stroke="currentColor" strokeWidth="1.300">
            <path d="M0 1h18M0 9h18M0 17h18" />
          </svg>
        </button>
      </SystemNav>
    </Screen>
  );
}
